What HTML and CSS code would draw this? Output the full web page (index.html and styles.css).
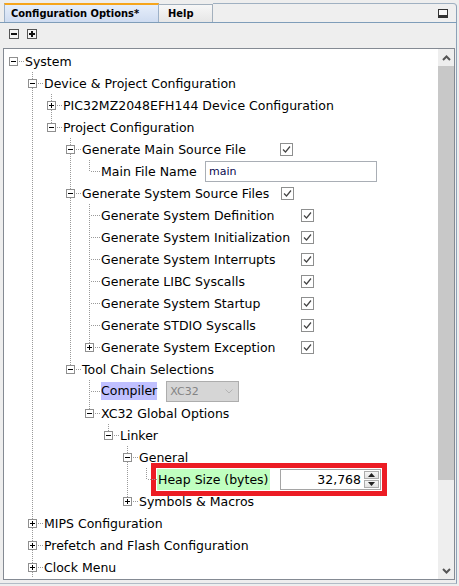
FILE: index.html
```html
<!DOCTYPE html>
<html>
<head>
<meta charset="utf-8">
<link rel="stylesheet" href="styles.css">
</head>
<body>
<div class="panel">
  <div class="tabbar">
    <div class="tab active">Configuration Options*</div>
    <div class="tab help">Help</div>
    <div class="tabfill"><span class="minbtn"></span></div>
  </div>
  <div class="content">
    <div class="toolbar">
      <span class="tbtn minus"></span>
      <span class="tbtn plus"></span>
    </div>
    <div class="tree">
      <div class="tree-rows">
        <div class="row"><span class="c root"><span class="bx minus"></span></span><span class="lbl">System</span></div>
        <div class="row"><span class="g"></span><span class="c mid"><span class="bx minus"></span></span><span class="lbl">Device &amp; Project Configuration</span></div>
        <div class="row"><span class="g"></span><span class="g v"></span><span class="c mid"><span class="bx plus"></span></span><span class="lbl">PIC32MZ2048EFH144 Device Configuration</span></div>
        <div class="row"><span class="g"></span><span class="g v"></span><span class="c end"><span class="bx minus"></span></span><span class="lbl">Project Configuration</span></div>
        <div class="row"><span class="g"></span><span class="g v"></span><span class="g"></span><span class="c mid"><span class="bx minus"></span></span><span class="lbl col-main">Generate Main Source File</span><svg class="cb" width="13" height="13" viewBox="0 0 13 13"><rect x="0.5" y="0.5" width="12" height="12" fill="#fff" stroke="#8e8f8f"/><path d="M3 6.5 5.5 9 10 3.5" fill="none" stroke="#444" stroke-width="1.2"/></svg></div>
        <div class="row"><span class="g"></span><span class="g v"></span><span class="g"></span><span class="g v"></span><span class="c end"></span><span class="lbl col-field">Main File Name</span><span class="field">main</span></div>
        <div class="row"><span class="g"></span><span class="g v"></span><span class="g"></span><span class="c mid"><span class="bx minus"></span></span><span class="lbl col-src">Generate System Source Files</span><svg class="cb" width="13" height="13" viewBox="0 0 13 13"><rect x="0.5" y="0.5" width="12" height="12" fill="#fff" stroke="#8e8f8f"/><path d="M3 6.5 5.5 9 10 3.5" fill="none" stroke="#444" stroke-width="1.2"/></svg></div>
        <div class="row"><span class="g"></span><span class="g v"></span><span class="g"></span><span class="g v"></span><span class="c mid"></span><span class="lbl col-gen">Generate System Definition</span><svg class="cb" width="13" height="13" viewBox="0 0 13 13"><rect x="0.5" y="0.5" width="12" height="12" fill="#fff" stroke="#8e8f8f"/><path d="M3 6.5 5.5 9 10 3.5" fill="none" stroke="#444" stroke-width="1.2"/></svg></div>
        <div class="row"><span class="g"></span><span class="g v"></span><span class="g"></span><span class="g v"></span><span class="c mid"></span><span class="lbl col-gen">Generate System Initialization</span><svg class="cb" width="13" height="13" viewBox="0 0 13 13"><rect x="0.5" y="0.5" width="12" height="12" fill="#fff" stroke="#8e8f8f"/><path d="M3 6.5 5.5 9 10 3.5" fill="none" stroke="#444" stroke-width="1.2"/></svg></div>
        <div class="row"><span class="g"></span><span class="g v"></span><span class="g"></span><span class="g v"></span><span class="c mid"></span><span class="lbl col-gen">Generate System Interrupts</span><svg class="cb" width="13" height="13" viewBox="0 0 13 13"><rect x="0.5" y="0.5" width="12" height="12" fill="#fff" stroke="#8e8f8f"/><path d="M3 6.5 5.5 9 10 3.5" fill="none" stroke="#444" stroke-width="1.2"/></svg></div>
        <div class="row"><span class="g"></span><span class="g v"></span><span class="g"></span><span class="g v"></span><span class="c mid"></span><span class="lbl col-gen">Generate LIBC Syscalls</span><svg class="cb" width="13" height="13" viewBox="0 0 13 13"><rect x="0.5" y="0.5" width="12" height="12" fill="#fff" stroke="#8e8f8f"/><path d="M3 6.5 5.5 9 10 3.5" fill="none" stroke="#444" stroke-width="1.2"/></svg></div>
        <div class="row"><span class="g"></span><span class="g v"></span><span class="g"></span><span class="g v"></span><span class="c mid"></span><span class="lbl col-gen">Generate System Startup</span><svg class="cb" width="13" height="13" viewBox="0 0 13 13"><rect x="0.5" y="0.5" width="12" height="12" fill="#fff" stroke="#8e8f8f"/><path d="M3 6.5 5.5 9 10 3.5" fill="none" stroke="#444" stroke-width="1.2"/></svg></div>
        <div class="row"><span class="g"></span><span class="g v"></span><span class="g"></span><span class="g v"></span><span class="c mid"></span><span class="lbl col-gen">Generate STDIO Syscalls</span><svg class="cb" width="13" height="13" viewBox="0 0 13 13"><rect x="0.5" y="0.5" width="12" height="12" fill="#fff" stroke="#8e8f8f"/><path d="M3 6.5 5.5 9 10 3.5" fill="none" stroke="#444" stroke-width="1.2"/></svg></div>
        <div class="row"><span class="g"></span><span class="g v"></span><span class="g"></span><span class="g v"></span><span class="c end"><span class="bx plus"></span></span><span class="lbl col-gen">Generate System Exception</span><svg class="cb" width="13" height="13" viewBox="0 0 13 13"><rect x="0.5" y="0.5" width="12" height="12" fill="#fff" stroke="#8e8f8f"/><path d="M3 6.5 5.5 9 10 3.5" fill="none" stroke="#444" stroke-width="1.2"/></svg></div>
        <div class="row"><span class="g"></span><span class="g v"></span><span class="g"></span><span class="c end"><span class="bx minus"></span></span><span class="lbl">Tool Chain Selections</span></div>
        <div class="row"><span class="g"></span><span class="g v"></span><span class="g"></span><span class="g"></span><span class="c mid"></span><span class="lbl sel-blue">Compiler</span><span class="combo"><span class="combo-text">XC32</span><svg width="8" height="5" viewBox="0 0 8 5"><path d="M0.5 0.5 4 4 7.5 0.5" fill="none" stroke="#b4b4b4"/></svg></span></div>
        <div class="row"><span class="g"></span><span class="g v"></span><span class="g"></span><span class="g"></span><span class="c end"><span class="bx minus"></span></span><span class="lbl">XC32 Global Options</span></div>
        <div class="row"><span class="g"></span><span class="g v"></span><span class="g"></span><span class="g"></span><span class="g"></span><span class="c end"><span class="bx minus"></span></span><span class="lbl">Linker</span></div>
        <div class="row"><span class="g"></span><span class="g v"></span><span class="g"></span><span class="g"></span><span class="g"></span><span class="g"></span><span class="c mid"><span class="bx minus"></span></span><span class="lbl">General</span></div>
        <div class="row"><span class="g"></span><span class="g v"></span><span class="g"></span><span class="g"></span><span class="g"></span><span class="g"></span><span class="g v"></span><span class="c end"></span><span class="mark"><span class="lbl sel-green">Heap Size (bytes)</span><span class="spin"><span class="spin-val">32,768</span><span class="spin-btns"><span class="sbtn"><svg width="7" height="4" viewBox="0 0 7 4"><path d="M3.5 0 7 4 0 4Z" fill="#222"/></svg></span><span class="sbtn"><svg width="7" height="4" viewBox="0 0 7 4"><path d="M0 0 7 0 3.5 4Z" fill="#222"/></svg></span></span></span></span></div>
        <div class="row"><span class="g"></span><span class="g v"></span><span class="g"></span><span class="g"></span><span class="g"></span><span class="g"></span><span class="c end"><span class="bx plus"></span></span><span class="lbl">Symbols &amp; Macros</span></div>
        <div class="row"><span class="g"></span><span class="c mid"><span class="bx plus"></span></span><span class="lbl">MIPS Configuration</span></div>
        <div class="row"><span class="g"></span><span class="c mid"><span class="bx plus"></span></span><span class="lbl">Prefetch and Flash Configuration</span></div>
        <div class="row"><span class="g"></span><span class="c mid"><span class="bx plus"></span></span><span class="lbl">Clock Menu</span></div>
      </div>
      <div class="scroll">
        <div class="sb-btn"><svg width="9" height="6" viewBox="0 0 9 6"><path d="M1 5 4.5 1.5 8 5" fill="none" stroke="#555" stroke-width="2"/></svg></div>
        <div class="sb-thumb"></div>
        <div class="sb-track"></div>
        <div class="sb-btn"><svg width="9" height="6" viewBox="0 0 9 6"><path d="M1 1 4.5 4.5 8 1" fill="none" stroke="#555" stroke-width="2"/></svg></div>
      </div>
    </div>
  </div>
</div>
</body>
</html>
```
FILE: styles.css
```css
html, body {
  margin: 0;
  padding: 0;
}
body {
  width: 459px;
  height: 586px;
  background: #eeeeee;
  font-family: "DejaVu Sans", Verdana, sans-serif;
  font-size: 12.5px;
  color: #000;
  overflow: hidden;
}
.panel {
  width: 457px;
}
.tabbar {
  display: flex;
  align-items: flex-end;
  height: 22px;
  padding-left: 4px;
  border-bottom: 1px solid #7f9db9;
}
.tab {
  box-sizing: border-box;
  font-family: "DejaVu Sans Condensed", "Liberation Sans", sans-serif;
  font-weight: bold;
  font-size: 11px;
  white-space: nowrap;
}
.tab.active {
  width: 155px;
  height: 19px;
  padding: 2px 0 0 6px;
  border-top: 2px solid #f6a51c;
  border-left: 1px solid #9db1c8;
  border-right: 1px solid #9db1c8;
  background: linear-gradient(#e6eefa, #cfdcf1);
}
.tab.help {
  width: 54px;
  height: 18px;
  padding: 2px 0 0 9px;
  border: 1px solid #a3b0bd;
  border-bottom: none;
  border-left: none;
  background: linear-gradient(#f7f7f7, #e6e6e6);
}
.tabfill {
  flex: 1;
  box-sizing: border-box;
  height: 19px;
  border-top: 1px solid #9fb0c1;
  border-right: 1px solid #8da2b8;
  border-top-right-radius: 4px;
  background: #efefef;
  display: flex;
  justify-content: flex-end;
  align-items: flex-start;
  padding: 5px 8px 0 0;
}
.minbtn {
  display: block;
  box-sizing: border-box;
  width: 10px;
  height: 9px;
  border: 1px solid #333;
  border-bottom-width: 3px;
  background: #f8f8f8;
}
.content {
  border-right: 1px solid #8da2b8;
  border-bottom: 1px solid #b2bcc6;
  padding-bottom: 3px;
}
.toolbar {
  box-sizing: border-box;
  height: 25px;
  display: flex;
  gap: 8px;
  padding: 6px 0 0 9px;
}
.tbtn {
  position: relative;
  box-sizing: border-box;
  width: 10px;
  height: 10px;
  border: 1px solid #555;
  background: #f4f4f4;
}
.tbtn::before {
  content: "";
  position: absolute;
  left: 1px;
  top: 3px;
  width: 6px;
  height: 2px;
  background: #111;
}
.tbtn.plus::after {
  content: "";
  position: absolute;
  left: 3px;
  top: 1px;
  width: 2px;
  height: 6px;
  background: #111;
}
.tree {
  box-sizing: border-box;
  margin-left: 3px;
  width: 452px;
  height: 532px;
  border: 1px solid #848a93;
  background: #fff;
  display: flex;
}
.tree-rows {
  flex: 1;
  padding-top: 1px;
  overflow: hidden;
}
.row {
  display: flex;
  align-items: center;
  height: 22px;
  white-space: nowrap;
}
.g, .c {
  flex: none;
  position: relative;
  width: 19px;
  height: 22px;
}
.g.v::before, .c::before {
  content: "";
  position: absolute;
  left: 9px;
  top: 0;
  width: 1px;
  height: 22px;
  background: repeating-linear-gradient(to bottom, #9a9a9a 0 1px, transparent 1px 2px);
}
.c.end::before {
  height: 12px;
}
.c.root::before {
  display: none;
}
.c::after {
  content: "";
  position: absolute;
  left: 10px;
  top: 11px;
  width: 10px;
  height: 1px;
  background: repeating-linear-gradient(to right, transparent 0 1px, #9a9a9a 1px 2px);
}
.bx {
  position: absolute;
  z-index: 1;
  left: 5px;
  top: 7px;
  box-sizing: border-box;
  width: 9px;
  height: 9px;
  border: 1px solid #8f8f8f;
  background: #fff;
}
.bx::before {
  content: "";
  position: absolute;
  left: 1px;
  top: 3px;
  width: 5px;
  height: 1px;
  background: #000;
}
.bx.plus::after {
  content: "";
  position: absolute;
  left: 3px;
  top: 1px;
  width: 1px;
  height: 5px;
  background: #000;
}
.lbl {
  flex: none;
  margin-left: 2px;
}
.col-main { width: 198px; }
.col-src { width: 199px; }
.col-gen { width: 200px; }
.col-field { width: 104px; }
.cb {
  flex: none;
  display: block;
}
.field {
  box-sizing: border-box;
  width: 172px;
  height: 21px;
  border: 1px solid #a9aeb5;
  background: #fff;
  padding: 0 0 0 3px;
  font-size: 11px;
  line-height: 19px;
  color: #0a0a50;
}
.sel-blue {
  background: #c0c0ff;
  height: 18px;
  line-height: 18px;
}
.combo {
  box-sizing: border-box;
  margin-left: 9px;
  width: 73px;
  height: 21px;
  border: 1px solid #adadad;
  background: #d6d6d6;
  display: flex;
  align-items: center;
  justify-content: space-between;
  padding: 0 5px 0 3px;
}
.combo-text {
  font-size: 11px;
  color: #838383;
}
.combo svg {
  display: block;
}
.mark {
  display: flex;
  align-items: center;
  margin-left: 1px;
  outline: 5px solid #ec1c24;
  outline-offset: 1px;
}
.sel-green {
  margin-left: 0;
  box-sizing: border-box;
  width: 113px;
  height: 21px;
  line-height: 21px;
  padding-left: 1px;
  background: #c0ffc0;
}
.spin {
  box-sizing: border-box;
  margin-left: 10px;
  width: 101px;
  height: 21px;
  border: 1px solid #a5a5a5;
  background: #fff;
  display: flex;
}
.spin-val {
  flex: 1;
  text-align: right;
  padding-right: 3px;
  line-height: 19px;
}
.spin-btns {
  width: 16px;
  display: flex;
  flex-direction: column;
  gap: 1px;
  padding: 1px 1px 1px 0;
  box-sizing: border-box;
}
.sbtn {
  flex: 1;
  box-sizing: border-box;
  border: 1px solid #acacac;
  background: linear-gradient(#f6f6f6, #e2e2e2);
  display: flex;
  align-items: center;
  justify-content: center;
}
.sbtn svg {
  display: block;
}
.scroll {
  flex: none;
  width: 16px;
  display: flex;
  flex-direction: column;
  background: #eeeeee;
}
.sb-btn {
  height: 17px;
  display: flex;
  align-items: center;
  justify-content: center;
}
.sb-btn svg {
  display: block;
}
.sb-thumb {
  height: 414px;
  background: #c8c8c8;
}
.sb-track {
  flex: 1;
}
```
